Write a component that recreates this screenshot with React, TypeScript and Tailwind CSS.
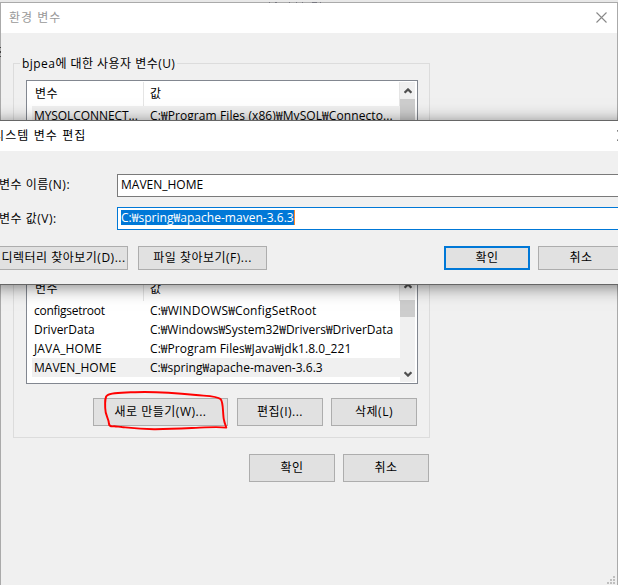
import type { ReactNode } from "react";
import clsx from "clsx";

type Variable = { name: string; value: string; nameClass?: string; valueClass?: string };

const USER_VARIABLES: Variable[] = [
  {
    name: "MYSQLCONNECT...",
    value: "C:₩Program Files (x86)₩MySQL₩Connecto...",
    nameClass: "tracking-[-0.08px]",
    valueClass: "tracking-[0.09px]",
  },
];

const SYSTEM_VARIABLES: Variable[] = [
  {
    name: "configsetroot",
    value: "C:₩WINDOWS₩ConfigSetRoot",
    nameClass: "tracking-[-0.27px]",
    valueClass: "tracking-[0.16px]",
  },
  { name: "DriverData", value: "C:₩Windows₩System32₩Drivers₩DriverData" },
  {
    name: "JAVA_HOME",
    value: "C:₩Program Files₩Java₩jdk1.8.0_221",
    nameClass: "tracking-[0.15px]",
    valueClass: "tracking-[0.07px]",
  },
  { name: "MAVEN_HOME", value: "C:₩spring₩apache-maven-3.6.3", valueClass: "tracking-[0.03px]" },
];

function CloseIcon({ className }: { className?: string }) {
  return (
    <svg viewBox="0 0 11 11" className={clsx("h-[11px] w-[11px] shrink-0", className)} fill="none" stroke="currentColor">
      <path d="M0.5 0.5 L10.5 10.5 M10.5 0.5 L0.5 10.5" strokeWidth="1.1" />
    </svg>
  );
}

function ScrollArrow({ down }: { down?: boolean }) {
  return (
    <svg viewBox="0 0 8 6" className={clsx("h-[6px] w-[8px]", down && "rotate-180")} fill="none" stroke="#505050">
      <path d="M0.6 4.8 L4 1.4 L7.4 4.8" strokeWidth="2.2" />
    </svg>
  );
}

function Button({ className, children }: { className?: string; children: ReactNode }) {
  return (
    <button
      className={clsx(
        "flex shrink-0 items-center justify-center whitespace-nowrap bg-[#e1e1e1] leading-4 tracking-[0.5px]",
        className,
      )}
    >
      {children}
    </button>
  );
}

type ListProps = { rows: Variable[]; selected: number; className: string; thumbClass: string };

function VariableList({ rows, selected, className, thumbClass }: ListProps) {
  return (
    <div className={clsx("flex w-[392px] overflow-hidden border border-[#828790] bg-white p-px", className)}>
      <div className="w-[372px] shrink-0">
        <div className="flex h-6 leading-[24px]">
          <div className="w-[116px] border-r border-[#e5e5e5] pl-[7px] tracking-[0.5px]">변수</div>
          <div className="flex-1 border-r border-[#e5e5e5] pl-[6px]">값</div>
        </div>
        {rows.map((row, i) => (
          <div
            key={row.name}
            className={clsx("ml-[4px] flex h-[19px] whitespace-nowrap leading-[19px]", i === selected && "bg-[#f0f0f0]")}
          >
            <div className={clsx("w-[116px] shrink-0 pl-[2px]", row.nameClass)}>{row.name}</div>
            <div className={clsx("pl-[2px]", row.valueClass)}>{row.value}</div>
          </div>
        ))}
      </div>
      <div className="flex w-[16px] flex-col items-center bg-[#f0f0f0]">
        <div className="flex h-[17px] items-center">
          <ScrollArrow />
        </div>
        <div className={clsx("w-[15px] bg-[#cdcdcd]", thumbClass)} />
        <div className="mt-auto flex h-[17px] items-center">
          <ScrollArrow down />
        </div>
      </div>
      <div className="w-px" />
    </div>
  );
}

function EditDialog() {
  return (
    <div className="absolute top-[120px] left-[-10px] h-[165px] w-[648px] border border-[#666666] bg-[#f0f0f0] shadow-[0_2px_16px_rgba(0,0,0,0.5)]">
      <div className="flex h-[30px] items-center justify-between bg-white pr-[9px] pl-[2px]">
        <span className="tracking-[1.1px]">시스템 변수 편집</span>
        <CloseIcon className="mb-[2px] text-black" />
      </div>
      <div className="pt-[23px] pl-[8px]">
        <div className="flex h-[23px] items-center">
          <label className="w-[118px] pb-[1px] tracking-[0.5px]">변수 이름(N):</label>
          <div className="h-[23px] w-[511px] border border-[#7a7a7a] bg-white pl-[3px] leading-[20px]">MAVEN_HOME</div>
        </div>
        <div className="mt-[10px] flex h-[23px] items-center">
          <label className="w-[118px] pt-px tracking-[0.5px]">변수 값(V):</label>
          <div className="flex h-[23px] w-[511px] items-start border border-[#0078d7] bg-white pt-[2px] pl-[3px]">
            <span className="h-[15px] border-r border-[#ff8728] bg-[#0078d7] leading-[15px] tracking-[0.03px] text-white">
              C:₩spring₩apache-maven-3.6.3
            </span>
          </div>
        </div>
        <div className="mt-[16px] flex">
          <Button className="h-6 w-[129px] border border-[#adadad]">디렉터리 찾아보기(D)...</Button>
          <Button className="ml-[10px] h-6 w-[129px] border border-[#adadad]">파일 찾아보기(F)...</Button>
          <Button className="ml-[177px] h-6 w-[86px] border-2 border-[#0078d7]">확인</Button>
          <Button className="ml-[8px] h-6 w-[86px] border border-[#adadad]">취소</Button>
        </div>
      </div>
    </div>
  );
}

function ResizeGrip() {
  return (
    <svg viewBox="0 0 8 8" className="absolute right-[3px] bottom-[1px] h-[8px] w-[8px]" fill="#bfbfbf">
      <path d="M6 0h2v2H6zM3 3h2v2H3zM6 3h2v2H6zM0 6h2v2H0zM3 6h2v2H3zM6 6h2v2H6z" />
    </svg>
  );
}

// Slivers of the window behind, showing past the top and left borders
function BackgroundSlivers() {
  return (
    <>
      <svg viewBox="0 0 58 1" className="absolute top-[2px] left-[268px] h-px w-[58px]" fill="#77777f">
        <path d="M1 0h1v1h-1zM7 0h2v1h-2zM21 0h1v1h-1zM28 0h1v1h-1zM34 0h1v1h-1zM44 0h5v1h-5zM52 0h1v1h-1z" />
      </svg>
      <svg viewBox="0 0 1 11" className="absolute top-[47px] left-0 h-[11px] w-px" fill="#444444">
        <path d="M0 0h1v1h-1zM0 4h1v2h-1zM0 9h1v1h-1z" />
      </svg>
    </>
  );
}

// Freehand red loop around the "new" button
function RedMark() {
  return (
    <svg viewBox="0 0 135 50" className="absolute top-[385px] left-[98px] h-[50px] w-[135px]" fill="none">
      <path
        d="M15.3 41.3 C13 41.5 11.3 41 11 39 C10.8 33 7.2 31 7.2 23 C7 16 6.8 11.5 9.5 10.2 C13 7.6 24 7.6 37 7.2 C55 6.6 75 7.7 98 10 C108 11 119 10.8 122.5 14 C125.7 17 124.5 29 126 35 C126.5 38 127.5 40 128.3 42.6 C122 41.8 115 42 107 42.4 C92 43 76 44.3 56 44.2 C40 44 30 42.6 24 42 C21 41.6 19 41.7 16.3 41.3"
        stroke="#ff0000"
        strokeWidth="1.9"
        strokeLinecap="round"
        strokeLinejoin="round"
      />
    </svg>
  );
}

export default function App() {
  return (
    <div className="relative h-[585px] w-[618px] overflow-hidden bg-[#e8e8e8] pt-[2px] font-['Open_Sans','Noto_Sans_CJK_KR',sans-serif] text-[12px] text-black">
      <div className="h-[583px] w-[618px] border border-b-0 border-[#aaaaaa] bg-[#f0f0f0]">
        <div className="flex h-[30px] items-center justify-between bg-white pr-[10px] pl-[8px]">
          <span className="tracking-[1px] text-[#999999]">환경 변수</span>
          <CloseIcon className="mb-[2px] text-[#888888]" />
        </div>

        <fieldset className="mt-[21px] ml-[12px] h-[166px] w-[417px] border border-[#dcdcdc] pt-[8px] pl-[12px]">
          <legend className="-ml-[6px] h-[18px] px-[2px] leading-[19px] tracking-[0.46px]">
            bjpea에 대한 사용자 변수(U)
          </legend>
          <VariableList rows={USER_VARIABLES} selected={0} className="h-[90px]" thumbClass="h-[30px]" />
        </fieldset>

        <div className="mt-[38px] ml-[12px] w-[417px] border border-[#dcdcdc] pt-[16px] pb-[11px] pl-[12px]">
          <VariableList rows={SYSTEM_VARIABLES} selected={3} className="h-[109px]" thumbClass="mt-[6px] h-[17px]" />
          <div className="mt-[14px] flex pl-[67px]">
            <Button className="h-7 w-[135px] border border-[#adadad]">새로 만들기(W)...</Button>
            <Button className="ml-[9px] h-7 w-[86px] border border-[#adadad]">편집(I)...</Button>
            <Button className="ml-[8px] h-7 w-[86px] border border-[#adadad]">삭제(L)</Button>
          </div>
        </div>

        <div className="mt-[16px] flex gap-[8px] pl-[248px]">
          <Button className="h-7 w-[86px] border border-[#adadad]">확인</Button>
          <Button className="h-7 w-[86px] border border-[#adadad]">취소</Button>
        </div>
      </div>

      <BackgroundSlivers />
      <ResizeGrip />
      <EditDialog />
      <RedMark />
    </div>
  );
}
